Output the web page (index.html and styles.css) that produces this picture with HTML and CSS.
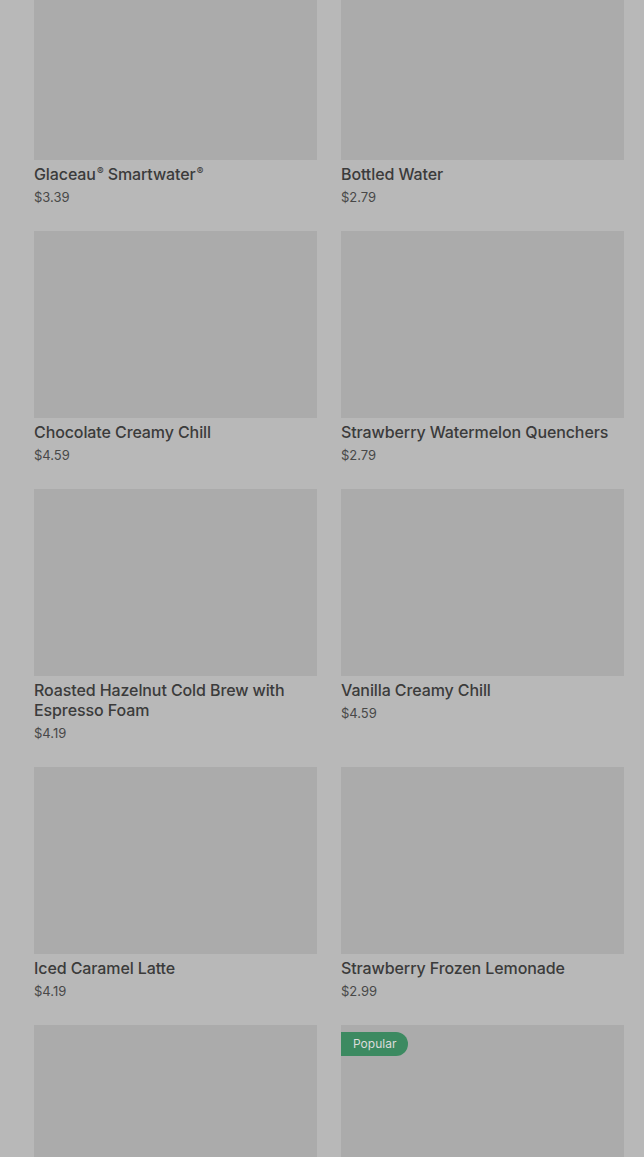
FILE: index.html
```html
<!DOCTYPE html>
<html>
<head>
<meta charset="utf-8">
<link rel="stylesheet" href="styles.css">
</head>
<body>
<div class="grid">
  <div class="card"><div class="img"></div><div class="title">Glaceau<span class="reg">®</span> Smartwater<span class="reg">®</span></div><div class="price">$3.39</div></div>
  <div class="card"><div class="img"></div><div class="title">Bottled Water</div><div class="price">$2.79</div></div>
  <div class="card"><div class="img"></div><div class="title">Chocolate Creamy Chill</div><div class="price">$4.59</div></div>
  <div class="card"><div class="img"></div><div class="title">Strawberry Watermelon Quenchers</div><div class="price">$2.79</div></div>
  <div class="card"><div class="img"></div><div class="title">Roasted Hazelnut Cold Brew with Espresso Foam</div><div class="price">$4.19</div></div>
  <div class="card"><div class="img"></div><div class="title">Vanilla Creamy Chill</div><div class="price">$4.59</div></div>
  <div class="card"><div class="img"></div><div class="title">Iced Caramel Latte</div><div class="price">$4.19</div></div>
  <div class="card"><div class="img"></div><div class="title">Strawberry Frozen Lemonade</div><div class="price">$2.99</div></div>
  <div class="card"><div class="img"></div></div>
  <div class="card"><div class="img"><span class="badge">Popular</span></div></div>
</div>
</body>
</html>
```

FILE: styles.css
```css
html, body {
  margin: 0;
  padding: 0;
  background: #b8b8b8;
  height: 100%;
  overflow: hidden;
}
body {
  font-family: Inter, "Noto Sans", Roboto, sans-serif;
}
.grid {
  display: grid;
  grid-template-columns: 283px 283px;
  column-gap: 24px;
  row-gap: 25px;
  padding: 0 20px 0 34px;
  margin-top: -27px;
}
.card {
  display: flex;
  flex-direction: column;
}
.img {
  position: relative;
  height: 187px;
  background: #ababab;
  margin-bottom: 4px;
}
.title {
  font-size: 16px;
  font-weight: 500;
  line-height: 20px;
  color: #3b3b3b;
  letter-spacing: -0.1px;
}
.reg {
  font-size: 10px;
  vertical-align: 5px;
  line-height: 0;
  margin-left: 1px;
}
.price {
  margin-top: 4px;
  font-size: 13px;
  line-height: 18px;
  color: #484848;
}
.badge {
  position: absolute;
  left: 0;
  top: 7px;
  height: 24px;
  line-height: 24px;
  padding: 0 12px 0 12px;
  background: #3c8a61;
  color: #dcdcdc;
  font-size: 12px;
  border-radius: 0 12px 12px 0;
}
```
